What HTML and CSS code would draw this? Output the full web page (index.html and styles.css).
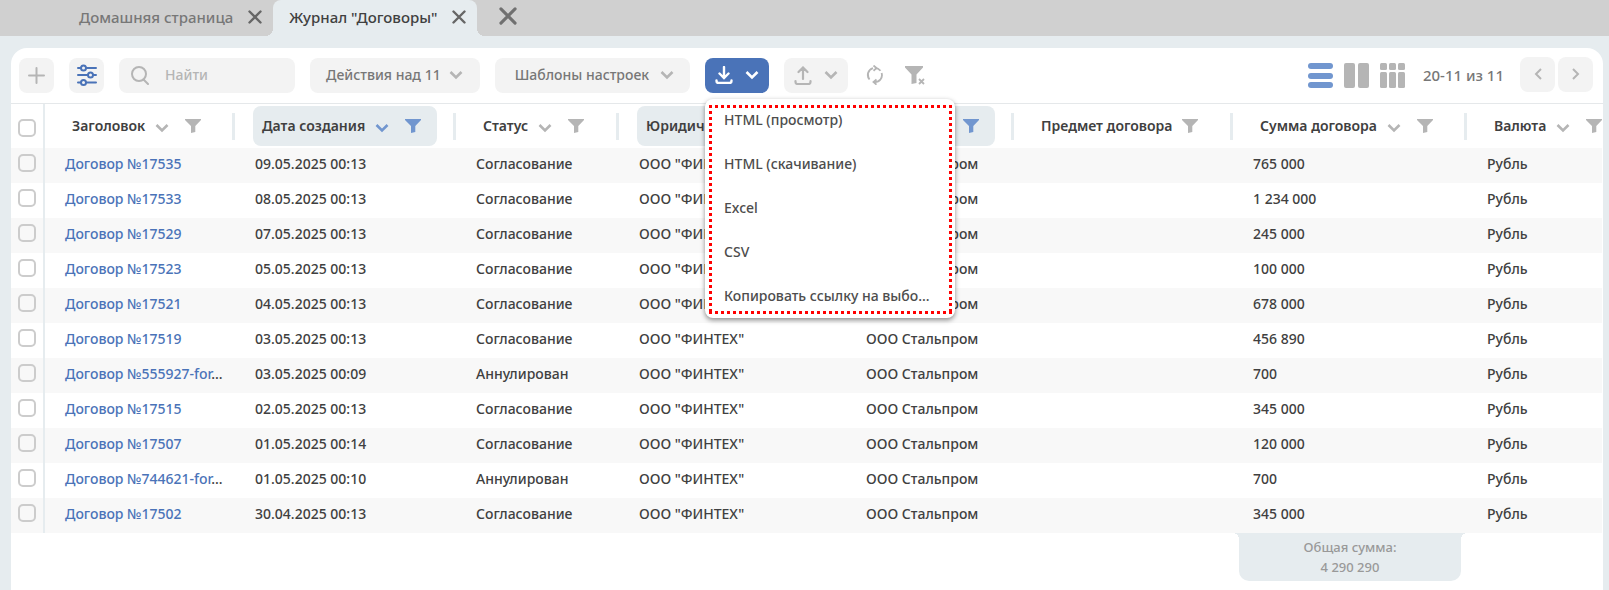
FILE: index.html
```html
<!DOCTYPE html>
<html lang="ru">
<head>
<meta charset="utf-8">
<title>Журнал "Договоры"</title>
<link rel="stylesheet" href="styles.css">
</head>
<body>
<svg class="sprite" aria-hidden="true">
  <symbol id="chevron" viewBox="0 0 14 10"><path d="M1.5 2 7 7.5 12.500 2" fill="none" stroke="currentColor" stroke-width="2.600"/></symbol>
  <symbol id="funnel" viewBox="0 0 16 14"><path d="M0 0h16v1L10.300 7v6L6 14V7L0 1z" fill="currentColor"/></symbol>
  <symbol id="cross" viewBox="0 0 14 14"><path d="M1.500 1.500l11 11M12.500 1.500l-11 11" fill="none" stroke="currentColor" stroke-width="2.400" stroke-linecap="round"/></symbol>
</svg>

<nav class="tabs">
  <div class="tab"><a href="#home">Домашняя страница</a><button class="close" aria-label="Закрыть вкладку"><svg><use href="#cross"/></svg></button></div>
  <div class="tab active"><a href="#journal">Журнал "Договоры"</a><button class="close" aria-label="Закрыть вкладку"><svg><use href="#cross"/></svg></button></div>
  <button class="close close-all" aria-label="Закрыть все"><svg><use href="#cross"/></svg></button>
</nav>

<main class="panel">
  <div class="toolbar">
    <button class="btn square" aria-label="Создать"><svg width="17" height="17" viewBox="0 0 17 17"><path d="M8.500 1v15M1 8.500h15" stroke="currentColor" stroke-width="2" stroke-linecap="round"/></svg></button>
    <button class="btn square accent" aria-label="Настройки"><svg width="20" height="22" viewBox="0 0 20 22" fill="none" stroke="currentColor" stroke-width="2" stroke-linecap="round"><path d="M1 4h3M9 4h10M1 11h10M16 11h3M1 18.500h3M9 18.500h10"/><circle cx="6.500" cy="4" r="2.500"/><circle cx="13.500" cy="11" r="2.500"/><circle cx="6.500" cy="18.500" r="2.500"/></svg></button>
    <label class="search"><svg width="18" height="19" viewBox="0 0 18 19" fill="none" stroke="currentColor" stroke-width="2"><circle cx="8" cy="8" r="7"/><path d="M12.500 13.500 17 18" stroke-linecap="round"/></svg><input type="text" placeholder="Найти" aria-label="Найти"></label>
    <button class="btn actions">Действия над 11<svg class="chev"><use href="#chevron"/></svg></button>
    <button class="btn templates">Шаблоны настроек<svg class="chev"><use href="#chevron"/></svg></button>
    <div class="export">
      <button class="btn split primary" aria-label="Экспорт"><svg width="18" height="18" viewBox="0 0 18 18" fill="none" stroke="currentColor" stroke-width="2.400" stroke-linecap="round"><path d="M9 1v10M4.500 7.500 9 12l4.500-4.500M1.500 14.500v.5q0 2 2 2h11q2 0 2-2v-.5"/></svg><svg class="chev"><use href="#chevron"/></svg></button>
      <div class="menu" role="menu">
        <div class="menu-frame">
          <button role="menuitem">HTML (просмотр)</button>
          <button role="menuitem">HTML (скачивание)</button>
          <button role="menuitem">Excel</button>
          <button role="menuitem">CSV</button>
          <button role="menuitem">Копировать ссылку на выбо...</button>
        </div>
      </div>
    </div>
    <button class="btn split" aria-label="Импорт"><svg width="18" height="19" viewBox="0 0 18 19" fill="none" stroke="currentColor" stroke-width="2.200" stroke-linecap="round"><path d="M9 13V2M4.500 6 9 1.500 13.500 6M1.500 15v1q0 2 2 2h11q2 0 2-2v-1"/></svg><svg class="chev"><use href="#chevron"/></svg></button>
    <button class="plain refresh" aria-label="Обновить"><svg width="18" height="20" viewBox="0 0 18 20" fill="none" stroke="currentColor" stroke-width="1.800"><path d="M7 3.200A7 7 0 0 0 3.500 14.500M7.500 17.100h1.500A7 7 0 0 0 15.600 8M9 3.100a7 7 0 0 1 5.500 2.600M2.200 9a7 7 0 0 0 1.300 5.500M14 15.200A7 7 0 0 0 16 10"/><path d="M7.500.5 10.500 3.100 7.500 5.700M10.500 14.500 7.500 17.100l3 2.500"/></svg></button>
    <button class="plain" aria-label="Сбросить фильтр"><svg width="20" height="19" viewBox="0 0 20 19"><path d="M0 0h18v1.500L11.500 8.500V17L6.500 18V8.500L0 1.500z" fill="currentColor"/><path d="M14 13l5 5M19 13l-5 5" stroke="currentColor" stroke-width="1.800"/></svg></button>

    <div class="views">
      <button class="plain current" aria-label="Список"><svg width="25" height="25" viewBox="0 0 25 25" fill="currentColor"><rect width="25" height="6" rx="3"/><rect y="10" width="25" height="6" rx="3"/><rect y="19" width="25" height="6" rx="3"/></svg></button>
      <button class="plain" aria-label="Колонки"><svg width="25" height="25" viewBox="0 0 25 25" fill="currentColor"><rect width="11" height="25" rx="2"/><rect x="14" width="11" height="25" rx="2"/></svg></button>
      <button class="plain" aria-label="Сетка"><svg width="25" height="25" viewBox="0 0 25 25" fill="currentColor"><rect width="7" height="7" rx="1.500"/><rect x="9" width="7" height="7" rx="1.500"/><rect x="18" width="7" height="7" rx="1.500"/><rect y="9" width="7" height="16" rx="1.500"/><rect x="9" y="9" width="7" height="16" rx="1.500"/><rect x="18" y="9" width="7" height="16" rx="1.500"/></svg></button>
    </div>
    <span class="range">20-11 из 11</span>
    <div class="pager">
      <button class="btn square" aria-label="Назад"><svg width="8" height="12" viewBox="0 0 8 12"><path d="M7 1 2 6l5 5" fill="none" stroke="currentColor" stroke-width="2"/></svg></button>
      <button class="btn square" aria-label="Вперёд"><svg width="8" height="12" viewBox="0 0 8 12"><path d="M1 1l5 5-5 5" fill="none" stroke="currentColor" stroke-width="2"/></svg></button>
    </div>
  </div>

  <table class="grid">
    <colgroup><col class="c-check"><col class="c-title"><col class="c-date"><col class="c-status"><col class="c-entity"><col class="c-partner"><col class="c-subject"><col class="c-sum"><col></colgroup>
    <thead>
      <tr>
        <th class="check"><input type="checkbox" aria-label="Выбрать все"></th>
        <th><div class="head"><span class="pill">Заголовок<svg class="chev"><use href="#chevron"/></svg><svg class="fun"><use href="#funnel"/></svg></span></div></th>
        <th><div class="head"><span class="pill on">Дата создания<svg class="chev"><use href="#chevron"/></svg><svg class="fun"><use href="#funnel"/></svg></span></div></th>
        <th><div class="head"><span class="pill">Статус<svg class="chev"><use href="#chevron"/></svg><svg class="fun"><use href="#funnel"/></svg></span></div></th>
        <th><div class="head"><span class="pill on">Юридическое лицо<svg class="fun near"><use href="#funnel"/></svg></span></div></th>
        <th><div class="head"><span class="pill on">Контрагент<svg class="fun near"><use href="#funnel"/></svg></span></div></th>
        <th><div class="head"><span class="pill">Предмет договора<svg class="fun near"><use href="#funnel"/></svg></span></div></th>
        <th><div class="head"><span class="pill">Сумма договора<svg class="chev"><use href="#chevron"/></svg><svg class="fun"><use href="#funnel"/></svg></span></div></th>
        <th><div class="head last"><span class="pill">Валюта<svg class="chev"><use href="#chevron"/></svg><svg class="fun"><use href="#funnel"/></svg></span></div></th>
      </tr>
    </thead>
    <tbody>
      <tr><td class="check"><input type="checkbox" aria-label="Договор №17535"></td><td><a href="#17535">Договор №17535</a></td><td>09.05.2025 00:13</td><td>Согласование</td><td>ООО "ФИНТЕХ"</td><td>ООО Стальпром</td><td></td><td>765 000</td><td>Рубль</td></tr>
      <tr><td class="check"><input type="checkbox" aria-label="Договор №17533"></td><td><a href="#17533">Договор №17533</a></td><td>08.05.2025 00:13</td><td>Согласование</td><td>ООО "ФИНТЕХ"</td><td>ООО Стальпром</td><td></td><td>1 234 000</td><td>Рубль</td></tr>
      <tr><td class="check"><input type="checkbox" aria-label="Договор №17529"></td><td><a href="#17529">Договор №17529</a></td><td>07.05.2025 00:13</td><td>Согласование</td><td>ООО "ФИНТЕХ"</td><td>ООО Стальпром</td><td></td><td>245 000</td><td>Рубль</td></tr>
      <tr><td class="check"><input type="checkbox" aria-label="Договор №17523"></td><td><a href="#17523">Договор №17523</a></td><td>05.05.2025 00:13</td><td>Согласование</td><td>ООО "ФИНТЕХ"</td><td>ООО Стальпром</td><td></td><td>100 000</td><td>Рубль</td></tr>
      <tr><td class="check"><input type="checkbox" aria-label="Договор №17521"></td><td><a href="#17521">Договор №17521</a></td><td>04.05.2025 00:13</td><td>Согласование</td><td>ООО "ФИНТЕХ"</td><td>ООО Стальпром</td><td></td><td>678 000</td><td>Рубль</td></tr>
      <tr><td class="check"><input type="checkbox" aria-label="Договор №17519"></td><td><a href="#17519">Договор №17519</a></td><td>03.05.2025 00:13</td><td>Согласование</td><td>ООО "ФИНТЕХ"</td><td>ООО Стальпром</td><td></td><td>456 890</td><td>Рубль</td></tr>
      <tr><td class="check"><input type="checkbox" aria-label="Договор №555927"></td><td><a href="#555927">Договор №555927-for</a>...</td><td>03.05.2025 00:09</td><td>Аннулирован</td><td>ООО "ФИНТЕХ"</td><td>ООО Стальпром</td><td></td><td>700</td><td>Рубль</td></tr>
      <tr><td class="check"><input type="checkbox" aria-label="Договор №17515"></td><td><a href="#17515">Договор №17515</a></td><td>02.05.2025 00:13</td><td>Согласование</td><td>ООО "ФИНТЕХ"</td><td>ООО Стальпром</td><td></td><td>345 000</td><td>Рубль</td></tr>
      <tr><td class="check"><input type="checkbox" aria-label="Договор №17507"></td><td><a href="#17507">Договор №17507</a></td><td>01.05.2025 00:14</td><td>Согласование</td><td>ООО "ФИНТЕХ"</td><td>ООО Стальпром</td><td></td><td>120 000</td><td>Рубль</td></tr>
      <tr><td class="check"><input type="checkbox" aria-label="Договор №744621"></td><td><a href="#744621">Договор №744621-for</a>...</td><td>01.05.2025 00:10</td><td>Аннулирован</td><td>ООО "ФИНТЕХ"</td><td>ООО Стальпром</td><td></td><td>700</td><td>Рубль</td></tr>
      <tr><td class="check"><input type="checkbox" aria-label="Договор №17502"></td><td><a href="#17502">Договор №17502</a></td><td>30.04.2025 00:13</td><td>Согласование</td><td>ООО "ФИНТЕХ"</td><td>ООО Стальпром</td><td></td><td>345 000</td><td>Рубль</td></tr>
    </tbody>
    <tfoot>
      <tr><td colspan="7"></td><td class="total"><div>Общая сумма:<br>4 290 290</div></td><td></td></tr>
    </tfoot>
  </table>
</main>
</body>
</html>
```

FILE: styles.css
```css
:root {
  --page: #e6ecef;
  --blue: #4a73b8;
  --sky: #7196cf;
  --icon: #b5b5b5;
  --control: #f3f3f3;
  --text: #404040;
}

* { box-sizing: border-box; }

body {
  margin: 0;
  height: 100vh;
  display: flex;
  flex-direction: column;
  overflow: hidden;
  background: var(--page);
  color: var(--text);
  font: 500 14px/20px "Noto Sans", sans-serif;
}

button, input { font: inherit; color: inherit; }
button { border: 0; padding: 0; background: none; white-space: nowrap; }
a { text-decoration: none; color: inherit; }
svg { display: block; flex: none; }
.sprite { position: absolute; width: 0; height: 0; }

/* Tabs */
.tabs { display: flex; height: 36px; flex: none; padding-left: 63px; background: #d0d0d0; }
.tab { display: flex; align-items: center; gap: 15px; padding: 0 11px 2px 16px; font-size: 15px; color: #777; }
.tab.active { position: relative; background: var(--page); color: var(--text); border-radius: 8px 8px 0 0; }
.tab.active::before, .tab.active::after { content: ""; position: absolute; bottom: 0; width: 8px; height: 8px; }
.tab.active::before { right: 100%; background: radial-gradient(circle at 0 0, transparent 8px, var(--page) 8px); }
.tab.active::after { left: 100%; background: radial-gradient(circle at 100% 0, transparent 8px, var(--page) 8px); }
.close { color: #666; }
.close svg { width: 14px; height: 14px; }
.close-all { margin-left: 22px; padding-bottom: 5px; color: #707070; }
.close-all svg { width: 18px; height: 18px; }

/* Panel and toolbar */
.panel { flex: 1; min-height: 0; margin: 12px 6px 0 11px; background: #fff; border-radius: 16px 16px 0 0; }
.toolbar { display: flex; align-items: center; gap: 15px; height: 56px; padding: 0 10px 1px 8px; border-bottom: 1px solid #e5e8ea; }
.btn { display: flex; align-items: center; justify-content: center; height: 35px; border-radius: 8px; background: var(--control); color: #777; }
.square { width: 35px; color: var(--icon); }
.accent { color: var(--blue); }
.chev { width: 14px; height: 10px; color: var(--icon); }
.search { display: flex; align-items: center; gap: 16px; width: 176px; height: 35px; padding-left: 12px; border-radius: 8px; background: var(--control); color: var(--icon); }
.search input { flex: 1; min-width: 0; height: 35px; padding: 0 0 2px; border: 0; background: none; outline: 0; }
.search input::placeholder { color: var(--icon); opacity: 1; }
.actions { gap: 8px; padding: 0 17px 0 16px; }
.templates { gap: 11px; padding: 0 16px 0 20px; }
.split { gap: 12px; width: 64px; color: var(--icon); }
.primary { background: var(--blue); color: #fff; }
.primary .chev { color: #fff; }
.plain { display: flex; color: var(--icon); }
.refresh { margin: 0 6px 0 3px; }
.views { display: flex; gap: 11px; margin-left: auto; }
.current { color: var(--sky); }
.range { font-size: 15px; color: #777; margin: 0 1px 0 3px; }
.pager { display: flex; gap: 3px; padding-bottom: 2px; }

/* Export menu */
.export { position: relative; }
.menu { position: absolute; z-index: 2; top: 41px; left: 0; width: 250px; padding: 6px 3px 4px 4px; border-radius: 8px; background: #fff; box-shadow: 0 2px 5px rgba(0, 0, 0, .45); }
.menu-frame {
  display: flex;
  flex-direction: column;
  gap: 24px;
  padding: 5px 15px 8px;
  background:
    repeating-linear-gradient(90deg, red 0 3px, transparent 3px 6px) top / 100% 3px no-repeat,
    repeating-linear-gradient(90deg, red 0 3px, transparent 3px 6px) bottom / 100% 3px no-repeat,
    repeating-linear-gradient(red 0 3px, transparent 3px 6px) left / 3px 100% no-repeat,
    repeating-linear-gradient(red 0 3px, transparent 3px 6px) right / 3px 100% no-repeat;
}
.menu button { text-align: left; color: #4d4d4d; }

/* Table */
.grid { width: 100%; table-layout: fixed; border-collapse: collapse; }
.c-check { width: 33px; }
.c-title { width: 191px; }
.c-date { width: 221px; }
.c-status { width: 163px; }
.c-entity { width: 227px; }
.c-partner { width: 168px; }
.c-subject { width: 219px; }
.c-sum { width: 234px; }
.grid th { height: 44px; padding: 0; font-weight: 600; text-align: left; }
.grid td { height: 35px; padding: 0 0 4px 20px; white-space: nowrap; }
.grid tbody tr:nth-child(odd) { background: #f8f8f8; }
.grid a { color: var(--blue); }
.grid .check { padding: 0 0 0 7px; border-right: 2px solid var(--page); }
.check input { appearance: none; display: block; width: 18px; height: 18px; margin: 0; border: 2px solid #ccc; border-radius: 5px; background: #fff; }
.grid tbody .check { padding-bottom: 6px; }
.grid tbody .check input { background: none; }
.grid th.check { padding-top: 3px; }

.head { display: flex; align-items: center; justify-content: space-between; padding-left: 18px; white-space: nowrap; }
.head::after { content: ""; width: 3px; height: 27px; background: var(--page); }
.head.last::after { display: none; }
.pill { display: flex; align-items: center; height: 40px; padding: 0 16px 0 9px; border-radius: 8px; }
.pill.on { background: var(--page); }
.pill .chev { margin: 3px 0 0 10px; }
.fun { width: 16px; height: 14px; margin-left: 16px; color: var(--icon); }
.fun.near { margin-left: 10px; }
.on .chev, .on .fun { color: var(--sky); }

.grid .total { padding: 0 6px; vertical-align: top; }
.total div { position: relative; padding: 4px 0; border-radius: 0 0 10px 10px; background: var(--page); text-align: center; font-size: 13px; color: #999; }
.total div::before, .total div::after { content: ""; position: absolute; top: 0; width: 6px; height: 6px; }
.total div::before { right: 100%; background: radial-gradient(circle at 0 100%, transparent 6px, var(--page) 6px); }
.total div::after { left: 100%; background: radial-gradient(circle at 100% 100%, transparent 6px, var(--page) 6px); }
```
